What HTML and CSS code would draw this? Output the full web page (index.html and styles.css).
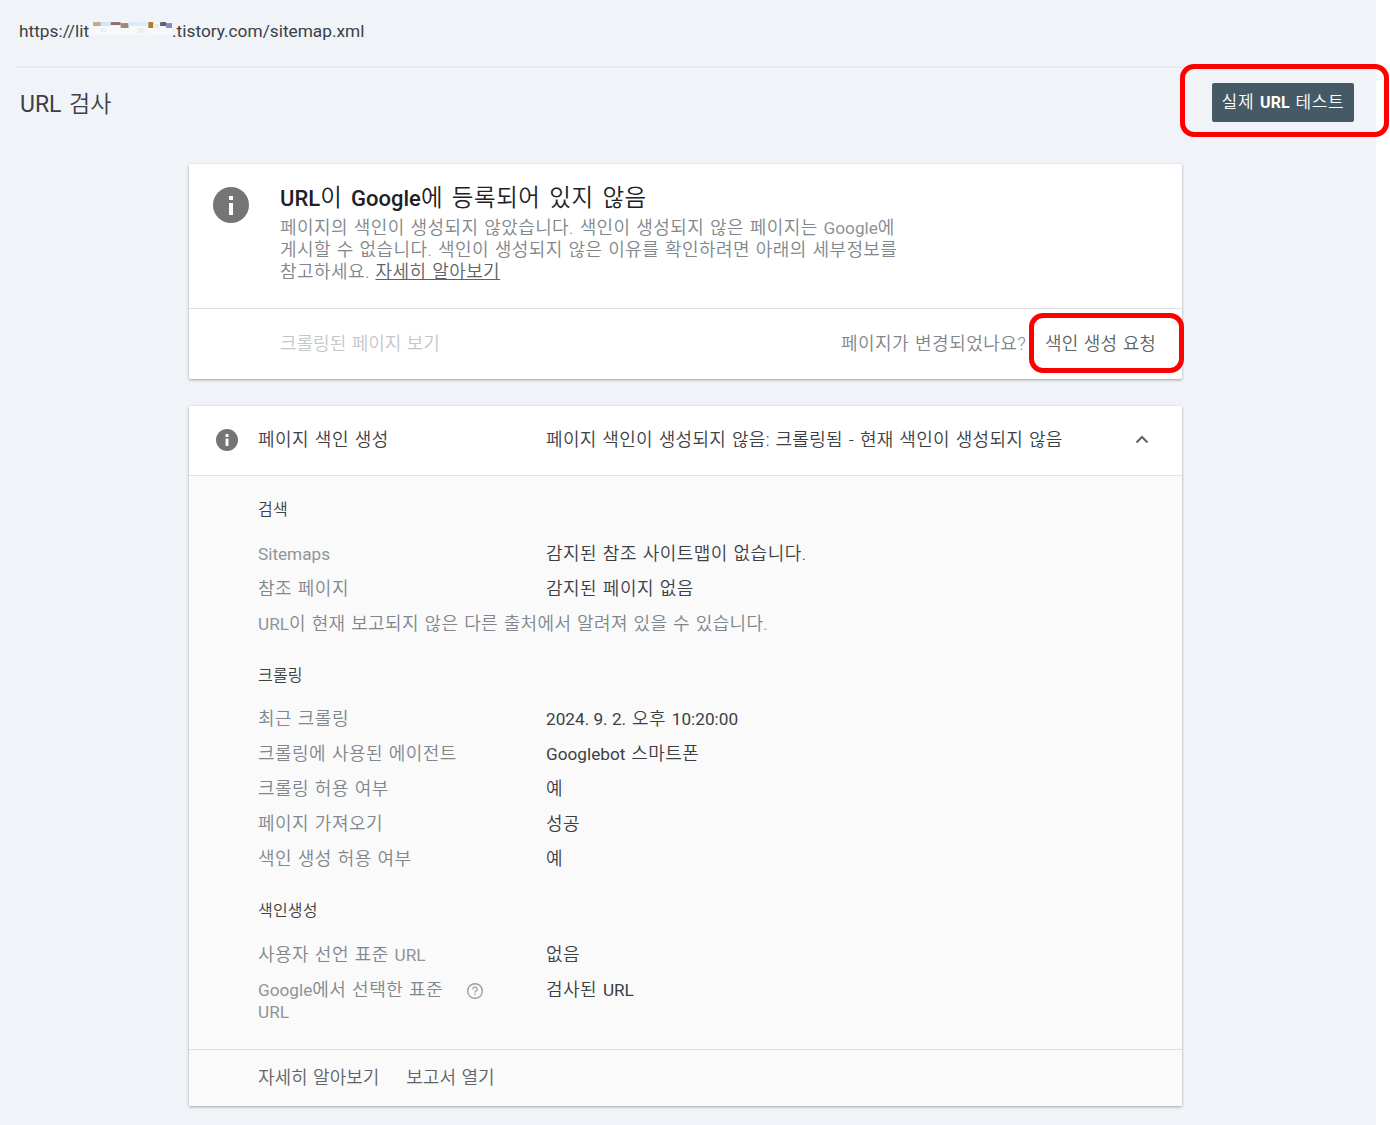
FILE: index.html
```html
<!DOCTYPE html>
<html lang="ko">
<head>
<meta charset="utf-8">
<title>URL 검사</title>
<link rel="stylesheet" href="styles.css">
</head>
<body>
<div class="page">
  <div class="urlbar">
    <span class="url-start">https://lit</span><svg class="redact" width="83" height="13" viewBox="3 0 84 13"><rect width="87" height="13" fill="#f7f8fa"/><rect x="7" y="0" width="8" height="4" fill="#c4a98f"/><rect x="15" y="0" width="10" height="4" fill="#d5e6f5"/><rect x="25" y="0" width="10" height="3" fill="#8a6f70"/><rect x="35" y="1" width="8" height="5" fill="#a58573"/><rect x="43" y="0" width="19" height="4" fill="#d6eff7"/><rect x="63" y="0" width="5" height="6" fill="#a87f2c"/><rect x="68" y="2" width="6" height="4" fill="#e4eeef"/><rect x="75" y="0" width="6" height="4" fill="#5d5f72"/><rect x="81" y="1" width="6" height="5" fill="#7f8fc0"/><rect x="14" y="6" width="6" height="4" fill="#eef0f2"/><rect x="52" y="6" width="7" height="5" fill="#eceeee"/></svg><span class="url-end">.tistory.com/sitemap.xml</span>
  </div>
  <div class="headrow">
    <h1 class="title"><span class="en">URL</span> 검사</h1>
    <button class="test-btn"><span class="btn-label">실제 <span class="en strong">URL</span> 테스트</span></button>
  </div>
  <main class="content">
    <section class="card">
      <div class="status">
        <svg class="info-big" viewBox="0 0 36 36" width="36" height="36"><circle cx="18" cy="18" r="18" fill="#757575"/><rect x="16" y="16" width="4" height="12" fill="#fff"/><rect x="16" y="9" width="4" height="4" fill="#fff"/></svg>
        <div class="status-text">
          <h2 class="status-title"><span class="en strong">URL</span>이 <span class="en strong">Google</span>에 등록되어 있지 않음</h2>
          <p class="status-desc">페이지의 색인이 생성되지 않았습니다. 색인이 생성되지 않은 페이지는 <span class="en">Google</span>에 게시할 수 없습니다. 색인이 생성되지 않은 이유를 확인하려면 아래의 세부정보를 참고하세요. <a class="learn" href="#">자세히 알아보기</a></p>
        </div>
      </div>
      <div class="actions">
        <span class="disabled">크롤링된 페이지 보기</span>
        <div class="request">
          <span class="changed">페이지가 변경되었나요?</span>
          <span class="req-link">색인 생성 요청</span>
        </div>
      </div>
    </section>
    <section class="card detail">
      <header class="detail-head">
        <svg class="info-small" viewBox="0 0 24 24" width="22" height="22"><circle cx="12" cy="12" r="12" fill="#757575"/><rect x="10.4" y="10.5" width="3.2" height="8" fill="#fff"/><rect x="10.4" y="5.5" width="3.2" height="3.2" fill="#fff"/></svg>
        <span class="dh-label">페이지 색인 생성</span>
        <span class="dh-value">페이지 색인이 생성되지 않음: 크롤링됨 - 현재 색인이 생성되지 않음</span>
        <svg class="chev" viewBox="0 0 14 9" width="14" height="9"><path d="M1.5 7.5 7 2l5.5 5.5" fill="none" stroke="#5f6368" stroke-width="2"/></svg>
      </header>
      <div class="detail-body">
        <h3 class="group first">검색</h3>
        <div class="row"><span class="k"><span class="en">Sitemaps</span></span><span class="v">감지된 참조 사이트맵이 없습니다.</span></div>
        <div class="row"><span class="k">참조 페이지</span><span class="v">감지된 페이지 없음</span></div>
        <div class="row note"><span><span class="en">URL</span>이 현재 보고되지 않은 다른 출처에서 알려져 있을 수 있습니다.</span></div>
        <h3 class="group">크롤링</h3>
        <div class="row"><span class="k">최근 크롤링</span><span class="v"><span class="en">2024. 9. 2.</span> 오후 <span class="en">10:20:00</span></span></div>
        <div class="row"><span class="k">크롤링에 사용된 에이전트</span><span class="v"><span class="en">Googlebot</span> 스마트폰</span></div>
        <div class="row"><span class="k">크롤링 허용 여부</span><span class="v">예</span></div>
        <div class="row"><span class="k">페이지 가져오기</span><span class="v">성공</span></div>
        <div class="row"><span class="k">색인 생성 허용 여부</span><span class="v">예</span></div>
        <h3 class="group">색인생성</h3>
        <div class="row"><span class="k">사용자 선언 표준 <span class="en">URL</span></span><span class="v">없음</span></div>
        <div class="row"><span class="k k-help"><span class="k-text"><span class="en">Google</span>에서 선택한 표준 <span class="en">URL</span></span><svg class="help" viewBox="0 0 18 18" width="18" height="18"><circle cx="9" cy="9" r="7.3" fill="none" stroke="#9e9e9e" stroke-width="1.4"/><path d="M6.8 7.2a2.2 2.2 0 1 1 3.4 1.8c-.8.5-1.2 1-1.2 1.8" fill="none" stroke="#9e9e9e" stroke-width="1.3"/><rect x="8.3" y="11.7" width="1.4" height="1.4" fill="#9e9e9e"/></svg></span><span class="v">검사된 <span class="en">URL</span></span></div>
      </div>
      <footer class="detail-foot">
        <a href="#">자세히 알아보기</a>
        <a href="#">보고서 열기</a>
      </footer>
    </section>
  </main>
  <div class="mark mark-test"></div>
  <div class="mark mark-req"></div>
</div>
</body>
</html>
```
FILE: styles.css
```css
* { box-sizing: border-box; }
html, body { margin: 0; padding: 0; background: #fff; }
body { font-family: Roboto, "Noto Sans CJK KR", sans-serif; font-size: 18px; font-weight: 350; letter-spacing: .45px; word-spacing: 1px; color: #202124; }
.en { font-size: 17.2px; font-weight: 400; letter-spacing: 0; word-spacing: 0; }
.row .k .en, .status-desc .en, .note .en { color: #8f9499; }
.strong { font-weight: 500; }
.page { position: relative; width: 1376px; height: 1125px; background: #f0f4f9; }
.urlbar { margin-left: 16px; height: 68px; padding: 21px 0 0 3px; border-bottom: 2px solid #e8ebee; font-size: 17.3px; font-weight: 400; letter-spacing: 0; word-spacing: 0; line-height: 20px; color: #3c4043; display: flex; align-items: flex-start; }
.url-start { white-space: nowrap; flex: none; }
.redact { margin-top: 1px; flex: none; }
.headrow { display: flex; justify-content: space-between; align-items: flex-start; padding: 15px 22px 0 20px; height: 96px; }
.title { margin: 2px 0 0; font-size: 23px; font-weight: 350; letter-spacing: 0; word-spacing: 2px; line-height: 40px; color: #3c4043; }
.title .en { font-size: 23px; }
.test-btn { width: 142px; height: 39px; border: 0; border-radius: 2px; background: #455a64; color: #fff; font: inherit; font-size: 17px; letter-spacing: .7px; word-spacing: 1px; padding: 0; }
.test-btn .en { font-size: 16px; font-weight: 700; }
.btn-label { display: block; padding-bottom: 5px; }
.content { margin-left: 189px; width: 993px; display: flex; flex-direction: column; gap: 27px; }
.card { background: #fff; border-radius: 2px; box-shadow: 0 1px 3px rgba(60,64,67,.45); }
.status { display: flex; height: 145px; border-bottom: 1px solid #e0e0e0; padding: 23px 0 0 24px; }
.info-big { flex: none; margin-right: 31px; }
.status-text { width: 625px; }
.status-title { margin: 0; font-size: 23.5px; font-weight: 350; letter-spacing: .55px; word-spacing: 2.5px; line-height: 22px; color: #202124; }
.status-title .en { font-size: 22px; font-weight: 500; }
.status-desc { margin: 7px 0 0; letter-spacing: .42px; line-height: 22px; color: #80868b; }
.learn { color: #5f6368; }
.actions { height: 70px; display: flex; justify-content: space-between; align-items: center; padding: 0 26px 4px 91px; }
.disabled { color: #c4c7c9; letter-spacing: 0; }
.request { display: flex; gap: 19px; }
.changed { color: #80868b; letter-spacing: .5px; }
.req-link { color: #5f6368; letter-spacing: .1px; }
.detail-head { height: 70px; display: flex; align-items: center; padding: 0 0 2px 27px; border-bottom: 1px solid #e0e0e0; }
.info-small { flex: none; margin-right: 20px; }
.dh-label { width: 288px; color: #3c4043; padding-bottom: 3px; }
.dh-value { color: #3c4043; flex: 1; letter-spacing: .32px; padding-bottom: 3px; }
.chev { margin-right: 33px; }
.detail-body { background: #fafafa; padding: 22px 0 0 69px; height: 573px; }
.group { margin: 22.5px 0 14px; font-size: 16px; font-weight: 350; letter-spacing: .2px; line-height: 24px; color: #3c4043; }
.group.first { margin-top: 0; }
.row { display: flex; line-height: 22px; padding: 6.5px 0; color: #80868b; }
.note { letter-spacing: .35px; }
.k { width: 288px; flex: none; padding-right: 30px; }
.v { color: #3c4043; }
.k-help { display: flex; align-items: flex-start; justify-content: space-between; padding-right: 62px; }
.k-text { width: 200px; }
.help { margin-top: 3px; flex: none; }
.detail-foot { height: 57px; display: flex; align-items: center; gap: 27px; padding: 0 0 4px 69px; border-top: 1px solid #e0e0e0; background: #fafafa; letter-spacing: 0; }
.detail-foot a { color: #5f6368; text-decoration: none; }
.mark { position: absolute; border: 5px solid #f00; border-radius: 14px; }
.mark-test { left: 1180px; top: 64px; width: 209px; height: 73px; }
.mark-req { left: 1029px; top: 313px; width: 155px; height: 60px; }
```
